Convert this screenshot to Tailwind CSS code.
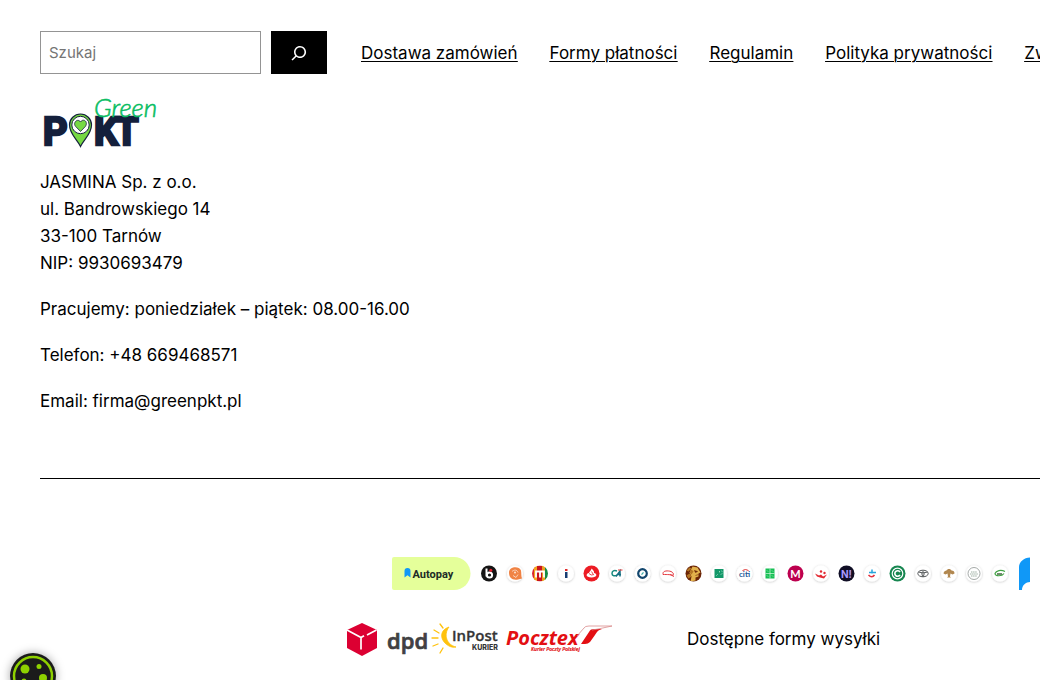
<!DOCTYPE html>
<html lang="pl">
<head>
    <meta charset="UTF-8">
    <meta name="viewport" content="width=device-width, initial-scale=1.0">
    <title>Green PKT</title>
    <script src="https://cdn.jsdelivr.net/npm/@tailwindcss/browser@4"></script>
</head>
<body class="overflow-hidden bg-white font-['Inter',sans-serif] text-[17px] leading-[27px] text-black">
    <footer class="pt-[31px] pl-10">
        <!-- Search and menu -->
        <div class="flex items-center gap-[34px]">
            <form role="search" class="flex shrink-0 gap-[10px]">
                <label for="search" class="sr-only">Szukaj</label>
                <input id="search" type="search" placeholder="Szukaj" class="h-[43px] w-[221px] border border-[#949494] px-2 text-[15px] placeholder:text-[#757575]">
                <button type="submit" aria-label="Szukaj" class="flex h-[43px] w-14 items-center justify-center bg-black text-white">
                    <svg viewBox="0 0 24 24" class="size-6" fill="currentColor">
                        <path d="M13 5c-3.3 0-6 2.7-6 6 0 1.4.5 2.7 1.3 3.7l-3.8 3.8 1.1 1.1 3.8-3.8c1 .8 2.3 1.3 3.7 1.3 3.3 0 6-2.7 6-6S16.3 5 13 5zm0 10.5c-2.5 0-4.5-2-4.5-4.5s2-4.5 4.5-4.5 4.5 2 4.5 4.5-2 4.5-4.5 4.5z"/>
                    </svg>
                </button>
            </form>
            <nav class="flex shrink-0 gap-8 pt-0.5 whitespace-nowrap underline decoration-1 underline-offset-2">
                <a href="#">Dostawa zamówień</a>
                <a href="#">Formy płatności</a>
                <a href="#">Regulamin</a>
                <a href="#">Polityka prywatności</a>
                <a href="#">Zwroty i reklamacje</a>
            </nav>
        </div>

        <!-- Logo -->
        <a href="#" class="mt-[19px] block w-[120px]" aria-label="Green PKT">
            <svg viewBox="0 0 120 60" class="h-[60px] w-[120px]">
                <g fill="#14203c" stroke="#14203c" stroke-width="2.500" font-family="Roboto,sans-serif" font-weight="700" font-size="38">
                    <text x="3" y="52">P</text>
                    <text x="54" y="52">K</text>
                    <text x="75" y="52">T</text>
                </g>
                <path d="M40.500 53.500C37 46 29.500 41 29.500 32a11 11 0 0 1 22 0c0 9-7.500 14-11 21.500z" fill="#76d943" stroke="#14203c" stroke-width="1.200"/>
                <circle cx="40.500" cy="32" r="8.700" fill="#fff" stroke="#14203c" stroke-width="1"/>
                <path d="M40.500 38.500l-5-5.200c-3-3.800 2.400-8.500 5-4.300 2.600-4.200 8-.500 5 4.300z" fill="#76d943" stroke="#14203c" stroke-width=".8"/>
                <text x="54" y="24" fill="#09bd62" stroke="#09bd62" stroke-width=".6" font-family="Lato,sans-serif" font-style="italic" font-weight="300" font-size="26">Green</text>
            </svg>
        </a>

        <!-- Contact -->
        <div class="mt-4 flex flex-col gap-[19px]">
            <p>JASMINA Sp. z o.o.<br>ul. Bandrowskiego 14<br>33-100 Tarnów<br>NIP: 9930693479</p>
            <p>Pracujemy: poniedziałek – piątek: 08.00-16.00</p>
            <p>Telefon: +48 669468571</p>
            <p>Email: firma@greenpkt.pl</p>
        </div>

        <hr class="mt-[63px] border-black">

        <!-- Payment methods -->
        <div class="mt-[78px] pl-[352px]">
            <svg viewBox="0 0 638 33" class="h-[33px] w-[638px]" role="img" aria-label="Autopay">
                <defs>
                    <filter id="soft" x="-30%" y="-30%" width="160%" height="170%">
                        <feDropShadow dx="0" dy=".5" stdDeviation=".8" flood-color="#000" flood-opacity=".25"/>
                    </filter>
                    <clipPath id="disc"><circle r="8"/></clipPath>
                </defs>
                <path d="M2 0h60a16.500 16.500 0 0 1 0 33H2a2 2 0 0 1-2-2V2a2 2 0 0 1 2-2z" fill="#e5ff9a"/>
                <path d="M12.500 20.500V14a3 3 0 0 1 6 0v6.500l-3-2.300z" fill="#1098f7"/>
                <text x="20.500" y="20.500" fill="#202b26" font-family="Roboto,sans-serif" font-weight="700" font-size="11">Autopay</text>

                <g filter="url(#soft)" fill="#fff">
                    <circle cx="123" cy="16.500" r="8"/><circle cx="174" cy="16.500" r="8"/><circle cx="225" cy="16.500" r="8"/>
                    <circle cx="250.500" cy="16.500" r="8"/><circle cx="276" cy="16.500" r="8"/><circle cx="327" cy="16.500" r="8"/>
                    <circle cx="352.500" cy="16.500" r="8"/><circle cx="378" cy="16.500" r="8"/><circle cx="429" cy="16.500" r="8"/>
                    <circle cx="480" cy="16.500" r="8"/><circle cx="531" cy="16.500" r="8"/><circle cx="557" cy="16.500" r="8"/>
                    <circle cx="582" cy="16.500" r="8"/><circle cx="608" cy="16.500" r="8"/>
                </g>
                <!-- Blik -->
                <g transform="translate(97 16.500)">
                    <circle r="8" fill="#151515"/>
                    <path d="M-2.500-5v8" stroke="#fff" stroke-width="2"/>
                    <circle cx=".5" cy="1.500" r="2.600" fill="none" stroke="#fff" stroke-width="2"/>
                    <circle cx="1.800" cy="-3.200" r="1.500" fill="#e52430"/>
                </g>
                <!-- ING -->
                <g transform="translate(123 16.500)">
                    <path d="M-6-1c0-6 10-7 12-2 .5 3 0 5 1 8l-4 1c-6 1-9-2-9-7z" fill="#f08345"/>
                    <path d="M-3-2c2-2 5-2 6 1M-2 2l3 2 2-3" fill="none" stroke="#fff" stroke-width=".6"/>
                    <circle cx="0" cy="-1" r="1" fill="#fbe3d5"/>
                </g>
                <!-- mBank -->
                <g transform="translate(148 16.500)">
                    <g clip-path="url(#disc)">
                        <path d="M-8-8h4V8h-4z" fill="#d8262c"/><path d="M-6-8h3V8h-3z" fill="#f4a81d"/>
                        <path d="M-3-8h5V8h-5z" fill="#c9141e"/><path d="M2-8h3V8H2z" fill="#e9a021"/><path d="M5-8h3V8H5z" fill="#158a43"/>
                    </g>
                    <path d="M-4 4v-6h8V4M0-2V4" fill="none" stroke="#fff" stroke-width="1.800"/>
                </g>
                <!-- Inteligo -->
                <g transform="translate(174 16.500)">
                    <path d="M-1-4.500h2.500v2H-1z" fill="#df2b2b"/><path d="M-1-1.500h2.500v6H-1z" fill="#183d73"/>
                </g>
                <!-- Santander -->
                <g transform="translate(199.500 16.500)">
                    <circle r="8" fill="#ec1c24"/>
                    <path d="M0-5c2 2 3 3 2.500 4.500C6 0 6 4 0 4S-6 0-2.500-.5C-2.500-2 0-3 0-5z" fill="#fff"/>
                    <path d="M-2.500 0q2 2.500 5 1M0-2l1.500 2.500" fill="none" stroke="#ec1c24" stroke-width=".8"/>
                </g>
                <!-- Credit Agricole -->
                <g transform="translate(225 16.500)" fill="none" stroke-width="1.500">
                    <path d="M0-2.500c-3-1-5 0-5 2.500s3 3 5 1.500" stroke="#16897e"/><path d="M-1 3l4-5.500V3M0 1h4" stroke="#176f83"/>
                    <path d="M1-3.500h4.500" stroke="#e33b3b" stroke-width="1"/>
                </g>
                <!-- Nest -->
                <g transform="translate(250.500 16.500)">
                    <circle r="4.300" fill="none" stroke="#12466d" stroke-width="2.200"/>
                    <path d="M-1 1.200l2-2.400" stroke="#3eafa8" stroke-width="1.300"/>
                </g>
                <!-- BOS -->
                <path transform="translate(276 16.500)" d="M-5 0c0-3 5-3 8-2 2 1 3 2 2 4C4 1-1 1-5 1v-1M2 1l4 2" fill="none" stroke="#e4393f" stroke-width="1"/>
                <!-- Pekao -->
                <g transform="translate(301.500 16.500)">
                    <circle r="8" fill="#6b2507"/>
                    <g clip-path="url(#disc)">
                        <path d="M-1-7l5 1 3 5-2 1v3l-3 1v3l-5 1 1-5-2-4z" fill="#e2b14b"/>
                        <path d="M-7-3l3-3 2 1-3 3zM-7 2l3-2 2 3-3 2zM-4-1l2-3 2 2-2 3z" fill="#b47624"/>
                        <path d="M1-3l3 1-2 1zM2 2l3-1" fill="#6b2507" stroke="#6b2507" stroke-width=".6"/>
                    </g>
                </g>
                <!-- BNP Paribas -->
                <g transform="translate(327 16.500)">
                    <path d="M-4.500-4.500h9v9h-9z" fill="#139869"/>
                    <path d="M-2.500 2l1-1M0-2l1 .5M2 1l1-1M2.500-2.500l.8.5" stroke="#c7f0de" stroke-width="1" fill="none"/>
                </g>
                <!-- Citi -->
                <text x="347" y="20" fill="#245a98" font-family="Lato,sans-serif" font-weight="700" font-size="8">citi</text>
                <path d="M350.500 13.500q3-2 6 0" fill="none" stroke="#df3434" stroke-width="1"/>
                <!-- Bank Spoldzielczy -->
                <g transform="translate(378 16.500)">
                    <path d="M-4.500-5h9V5h-9z" fill="#17bf54"/>
                    <path d="M0-5V5M-4.500 0h9M-3-3l1 1M2-3l1 1M-3 2l1 1M2 2l1 1" stroke="#d2f8df" stroke-width=".7"/>
                </g>
                <!-- Millennium -->
                <circle cx="403.500" cy="16.500" r="8" fill="#bd004f"/>
                <text x="403.500" y="20.500" text-anchor="middle" fill="#fff" font-family="Lato,sans-serif" font-weight="700" font-size="11">M</text>
                <!-- Alior -->
                <g transform="translate(429 16.500)">
                    <path d="M-6 0l4 2 2-1 2 2 4-2-3 4-4-1-3-1z" fill="#e32932"/>
                    <circle cx="0" cy="-2" r="1.200" fill="#e32932"/><circle cx="3.500" cy="-.5" r="1.200" fill="#e32932"/>
                </g>
                <!-- Noble -->
                <circle cx="454.500" cy="16.500" r="8" fill="#100e25"/>
                <text x="454.500" y="20.500" text-anchor="middle" fill="#a99aff" font-family="Inter,sans-serif" font-weight="700" font-size="10">N!</text>
                <!-- VeloBank -->
                <g transform="translate(480 16.500)" fill="none">
                    <path d="M0-4v4M-3-1h7" stroke="#26a5dc" stroke-width="1.500"/><path d="M-3.500 1.500q3.500 3.500 6 0" stroke="#e4313d" stroke-width="1.600"/>
                </g>
                <!-- SGB -->
                <g transform="translate(505.500 16.500)">
                    <circle r="8" fill="#178650"/><circle r="5.300" fill="none" stroke="#fff" stroke-width="1.200"/>
                    <path d="M2.500-1.500a2.800 2.800 0 1 0 0 3" fill="none" stroke="#fff" stroke-width="1.600"/>
                </g>
                <!-- Toyota -->
                <g transform="translate(531 16.500)" fill="none" stroke="#55585a" stroke-width="1">
                    <ellipse rx="5.200" ry="3.300"/><path d="M0 3.300C-1.500 1-1.500-1.500 0-2c1.500.5 1.500 3 0 5.300"/><path d="M-4.500-1.500q4.500 2 9 0"/>
                </g>
                <!-- Bank tree -->
                <path transform="translate(557 16.500)" d="M-5.500 0c0-2 2-3 3-3 1-2 4-2 5 0 2 0 3 1 3 3l-2 1-2-1-.500 3 1 1h-4l1-1-.500-3-2 1z" fill="#b1874f"/>
                <!-- Bank Nowy -->
                <g transform="translate(582 16.500)">
                    <circle r="6" fill="none" stroke="#8d9390" stroke-width=".8"/>
                    <path d="M-3-1.500h6M-4 .5h8M-3 2.500h6" stroke="#91a596" stroke-width=".9" stroke-dasharray="1.500 .6"/>
                </g>
                <!-- BS Brodnica -->
                <g transform="translate(608 16.500)" fill="none">
                    <path d="M5-2c-4-2-9-1-10 2 0 3 7 3 9 0" stroke="#42a345" stroke-width="1.200"/>
                    <path d="M-3 .5h5" stroke="#587553" stroke-width="1.700"/>
                </g>
                <path d="M627 33V10c0-5 5-9.500 11-9.500V25c-4 0-8 3-8 8z" fill="#1098f7"/>
            </svg>
        </div>

        <!-- Delivery methods -->
        <div class="mt-[26px] flex items-center gap-[74px] pl-[304px]">
            <svg viewBox="0 0 269 44" class="h-11 w-[269px] shrink-0" role="img" aria-label="DPD, InPost, Pocztex">
                <!-- DPD -->
                <path d="M18 7l15 7v18l-15 8-15-8V14z" fill="#dc0032"/>
                <path d="M3 14l14 7.500v12M32.500 14L23 19" fill="none" stroke="#fff" stroke-width="1.700"/>
                <path d="M17 21.500l3-1.800" stroke="#fff" stroke-width="1.700"/>
                <text x="43" y="33" fill="#414042" stroke="#414042" stroke-width=".7" font-family="'Open Sans',sans-serif" font-weight="600" font-size="22">dpd</text>
                <!-- InPost -->
                <path d="M105 11c-9 3-9 11-4 16 3 3 7 5 11 4-9-2-13-12-7-20z" fill="#ffc20e" stroke="#ffc20e" stroke-width=".8" stroke-linejoin="round"/>
                <path d="M96 8l3 4M90 14l5 3M88 22h6M89 30l5-2M96 37l3-5" stroke="#ffc20e" stroke-width="1.300" stroke-linecap="round"/>
                <text x="108" y="25" fill="#353536" stroke="#353536" stroke-width=".3" font-family="'Open Sans',sans-serif" font-weight="600" font-size="15">InPost</text>
                <text x="128" y="34" fill="#353536" font-family="Inter,sans-serif" font-weight="800" font-size="7">KURIER</text>
                <!-- Pocztex -->
                <text x="162" y="29" fill="#e30f13" font-family="'Open Sans',sans-serif" font-weight="700" font-style="italic" font-size="20">Pocztex</text>
                <path d="M237 28l8-12c1-2 2-3 5-3h8c-4 1-5 3-7 6l-5 7q-2 2-5 2z" fill="#e30f13"/>
                <path d="M233 20l7-8q1-2 5-2h23l-14 3-6 1" fill="none" stroke="#d98a8c" stroke-width=".8"/>
                <text x="187" y="35" fill="#e30f13" stroke="#e30f13" stroke-width=".2" font-family="'Open Sans',sans-serif" font-style="italic" font-weight="600" font-size="5">Kurier Poczty Polskiej</text>
            </svg>
            <p class="pt-0.5 whitespace-nowrap">Dostępne formy wysyłki</p>
        </div>
    </footer>

    <!-- Cookie settings -->
    <button type="button" aria-label="Ustawienia plików cookie" class="fixed -bottom-[19px] left-[10px] size-[46px] rounded-full shadow-[0_0_10px_rgba(0,0,0,0.35)]">
        <svg viewBox="0 0 46 46" class="size-full">
            <circle cx="23" cy="23" r="23" fill="#1b1b1b"/>
            <circle cx="23" cy="23" r="19" fill="none" stroke="#8ed100" stroke-width="2.500"/>
            <g fill="#8ed100">
                <circle cx="15" cy="16" r="4.500"/><circle cx="29" cy="13.500" r="2.500"/><circle cx="33" cy="25" r="4"/>
                <circle cx="14" cy="28" r="2.500"/><circle cx="23" cy="34" r="3.500"/>
            </g>
        </svg>
    </button>
</body>
</html>
